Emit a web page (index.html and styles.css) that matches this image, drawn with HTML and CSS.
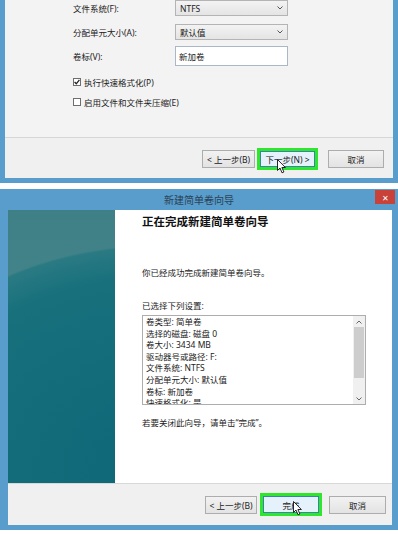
FILE: index.html
```html
<!DOCTYPE html>
<html lang="zh-CN">
<head>
    <meta charset="UTF-8">
    <meta name="viewport" content="width=device-width, initial-scale=1.0">
    <title>新建简单卷向导</title>
    <link rel="stylesheet" href="styles.css">
</head>
<body>
    <!-- 格式化分区 -->
    <div class="win-format">
        <div class="format-body">
            <div class="field">
                <label>文件系统(F):</label>
                <div class="select">NTFS
                    <svg width="6" height="4" viewBox="0 0 6 4"><path d="M0.5 0.5 L3 3 L5.5 0.5" fill="none" stroke="#555" stroke-width="1"/></svg>
                </div>
            </div>
            <div class="field">
                <label>分配单元大小(A):</label>
                <div class="select">默认值
                    <svg width="6" height="4" viewBox="0 0 6 4"><path d="M0.5 0.5 L3 3 L5.5 0.5" fill="none" stroke="#555" stroke-width="1"/></svg>
                </div>
            </div>
            <div class="field field-input">
                <label>卷标(V):</label>
                <div class="text-input">新加卷</div>
            </div>
            <div class="checks">
                <div class="check">
                    <span class="box">
                        <svg width="6" height="6" viewBox="0 0 6 6"><path d="M0.6 3 L2.3 4.8 L5.4 0.8" fill="none" stroke="#222" stroke-width="1.3"/></svg>
                    </span>
                    执行快速格式化(P)
                </div>
                <div class="check">
                    <span class="box"></span>
                    启用文件和文件夹压缩(E)
                </div>
            </div>
        </div>
        <div class="dialog-footer">
            <div class="btn btn-back">&lt; 上一步(B)</div>
            <div class="focus">
                <div class="btn btn-next">下一步(N) &gt;</div>
                <svg class="cursor cursor-top" width="10" height="15" viewBox="0 0 10 15"><path d="M0.5 0.5 L0.5 11.5 L3 9 L5 13.8 L6.9 13 L4.9 8.5 L8.4 8.5 Z" fill="#fff" stroke="#111" stroke-width="0.9"/></svg>
            </div>
            <div class="btn btn-cancel">取消</div>
        </div>
    </div>

    <!-- 完成向导 -->
    <div class="wizard">
        <div class="titlebar">
            <span></span>
            <span class="title">新建简单卷向导</span>
            <span class="close">✕</span>
        </div>
        <div class="wizard-frame">
            <div class="wizard-main">
                <div class="side"></div>
                <div class="content">
                    <h1>正在完成新建简单卷向导</h1>
                    <p class="done">你已经成功完成新建简单卷向导。</p>
                    <p class="chosen">已选择下列设置:</p>
                    <div class="summary">
                        <ul>
                            <li>卷类型: 简单卷</li>
                            <li>选择的磁盘: 磁盘 0</li>
                            <li>卷大小: 3434 MB</li>
                            <li>驱动器号或路径: F:</li>
                            <li>文件系统: NTFS</li>
                            <li>分配单元大小: 默认值</li>
                            <li>卷标: 新加卷</li>
                            <li>快速格式化: 是</li>
                        </ul>
                        <div class="scrollbar">
                            <span class="arrow">
                                <svg width="6" height="4" viewBox="0 0 6 4"><path d="M0.5 3.5 L3 1 L5.5 3.5" fill="none" stroke="#666" stroke-width="1"/></svg>
                            </span>
                            <span class="thumb"></span>
                            <span class="track"></span>
                            <span class="arrow">
                                <svg width="6" height="4" viewBox="0 0 6 4"><path d="M0.5 0.5 L3 3 L5.5 0.5" fill="none" stroke="#666" stroke-width="1"/></svg>
                            </span>
                        </div>
                    </div>
                    <p class="close-tip">若要关闭此向导，请单击“完成”。</p>
                </div>
            </div>
            <div class="wizard-footer">
                <div class="btn btn-back2">&lt; 上一步(B)</div>
                <div class="focus focus-finish">
                    <div class="btn btn-finish">完成</div>
                    <svg class="cursor cursor-bottom" width="10" height="15" viewBox="0 0 10 15"><path d="M0.5 0.5 L0.5 11.5 L3 9 L5 13.8 L6.9 13 L4.9 8.5 L8.4 8.5 Z" fill="#fff" stroke="#111" stroke-width="0.9"/></svg>
                </div>
                <div class="btn btn-cancel2">取消</div>
            </div>
        </div>
    </div>
</body>
</html>
```

FILE: styles.css
```css
* {
    margin: 0;
    padding: 0;
    box-sizing: border-box;
}

body {
    width: 398px;
    height: 536px;
    overflow: hidden;
    background: #ffffff;
    font-family: "Noto Sans", "Noto Sans CJK SC", sans-serif;
    font-size: 8.5px;
    color: #222;
}

/* ---------- top dialog ---------- */

.win-format {
    border: 5px solid #589dcb;
    border-top: 0;
    background: #f0f0f0;
    margin-bottom: 6px;
}

.format-body {
    height: 137px;
    padding-left: 68px;
    background: #f3f3f3;
}

.field {
    display: flex;
    align-items: center;
}

.field + .field {
    margin-top: 8px;
}

.field.field-input {
    margin-top: 6px;
}

.field label {
    width: 102px;
}

.select {
    width: 113px;
    height: 16px;
    border: 1px solid #b4b4b4;
    background: linear-gradient(#f3f3f3, #e4e4e4);
    display: flex;
    align-items: center;
    justify-content: space-between;
    padding: 0 4px;
}

.text-input {
    width: 113px;
    height: 20px;
    border: 1px solid #a9b8c8;
    background: #ffffff;
    display: flex;
    align-items: center;
    padding: 0 3px;
}

.checks {
    margin-top: 10px;
    display: flex;
    flex-direction: column;
    gap: 8px;
}

.check {
    display: flex;
    align-items: center;
    gap: 3px;
    height: 12px;
}

.box {
    width: 8px;
    height: 8px;
    border: 1px solid #6e6e6e;
    background: #ffffff;
    display: flex;
    align-items: center;
    justify-content: center;
}

.dialog-footer {
    height: 41px;
    border-top: 1px solid #d6d6d6;
    display: flex;
    align-items: center;
    justify-content: flex-end;
    padding: 1px 9px 0 0;
}

.btn {
    height: 18px;
    border: 1px solid #adadad;
    background: linear-gradient(#f2f2f2, #e3e3e3);
    display: flex;
    align-items: center;
    justify-content: center;
    color: #222;
}

.btn-back {
    width: 53px;
    margin-right: 2px;
}

.focus {
    border: 3px solid #2ee62a;
    margin-right: 10px;
    position: relative;
}

.btn-next {
    width: 55px;
    height: 16px;
    background: #e5f1fb;
    border-color: #3c7fb1;
}

.btn-cancel {
    width: 56px;
}

.cursor {
    position: absolute;
}

.cursor-top {
    left: 17px;
    top: 8px;
}

/* ---------- wizard ---------- */

.titlebar {
    height: 21px;
    background: #589dcb;
    display: grid;
    grid-template-columns: 1fr auto 1fr;
    align-items: center;
}

.title {
    font-size: 10px;
    color: #2c4257;
}

.close {
    justify-self: end;
    align-self: start;
    width: 20px;
    height: 14px;
    margin: 1px 3px 0 0;
    background: #c8423a;
    color: #ffffff;
    font-size: 8px;
    display: flex;
    align-items: center;
    justify-content: center;
}

.wizard-frame {
    border: solid #589dcb;
    border-width: 0 6px 5px 8px;
}

.wizard-main {
    display: flex;
    height: 273px;
}

.side {
    width: 107px;
    background:
        radial-gradient(ellipse 300px 225px at 150px 260px, #0e6777 0%, #17707c 85%, #2a7a83 99%, transparent 100%),
        linear-gradient(#3f8087, #4d8d91);
}

.content {
    flex: 1;
    background: #ffffff;
    padding: 4px 0 0 27px;
}

.content h1 {
    font-size: 11.5px;
    font-weight: 700;
    line-height: 16px;
    color: #111;
}

.content p {
    line-height: 12px;
}

.done {
    margin-top: 37px;
}

.chosen {
    margin-top: 21px;
}

.summary {
    margin-top: 3px;
    width: 224px;
    height: 90px;
    border: 1px solid #adadad;
    display: flex;
}

.summary ul {
    flex: 1;
    list-style: none;
    padding: 0 3px;
    line-height: 11.6px;
    overflow: hidden;
}

.scrollbar {
    width: 12px;
    display: flex;
    flex-direction: column;
    background: #f0f0f0;
}

.arrow {
    height: 11px;
    display: flex;
    align-items: center;
    justify-content: center;
}

.thumb {
    height: 51px;
    background: #cdcdcd;
    margin: 0 1px;
}

.track {
    flex: 1;
}

.close-tip {
    margin-top: 12px;
}

.wizard-footer {
    height: 42px;
    border-top: 1px solid #d8d8d8;
    background: #f0f0f0;
    display: flex;
    align-items: center;
    justify-content: flex-end;
    padding-right: 6px;
}

.btn-back2 {
    width: 52px;
    margin-right: 3px;
}

.focus-finish {
    margin-right: 7px;
}

.btn-finish {
    width: 56px;
    height: 17px;
    background: #e5f1fb;
    border-color: #3c7fb1;
}

.btn-cancel2 {
    width: 57px;
}

.cursor-bottom {
    left: 30px;
    top: 5px;
}
```
